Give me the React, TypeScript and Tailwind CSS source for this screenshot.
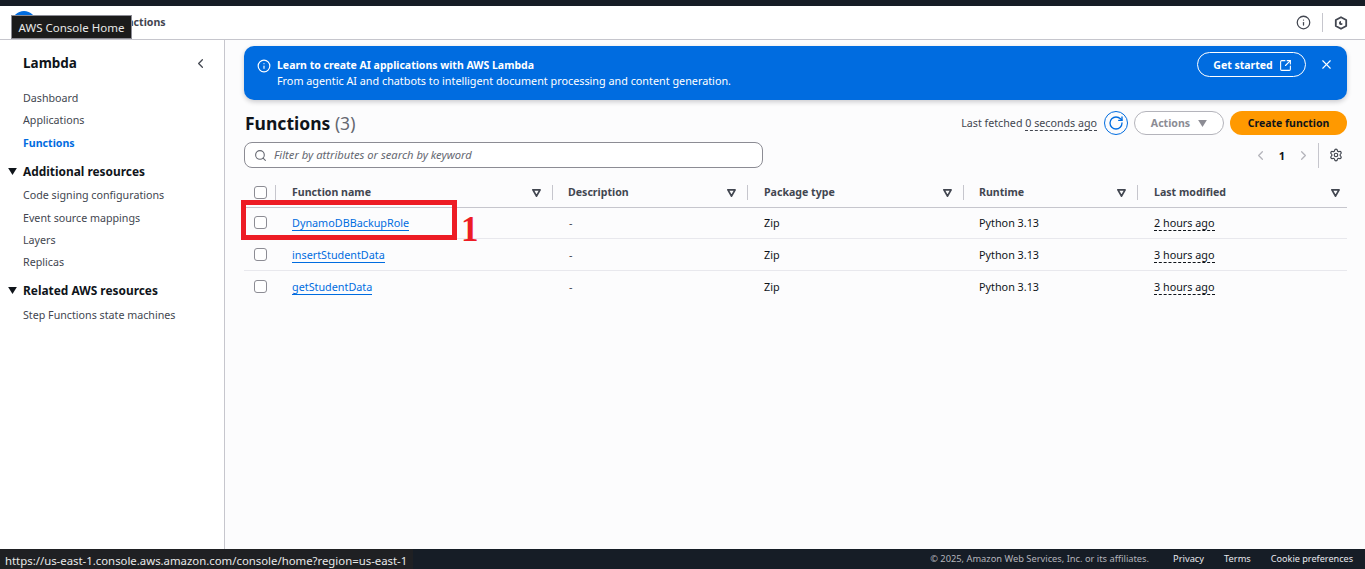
import React from 'react';
import { ChevronLeft, ChevronRight, Info, Search, X, RotateCw, Settings, SquareArrowOutUpRight } from 'lucide-react';

const columns = 'grid grid-cols-[32px_277px_195px_216px_174px_209px]';

const functionRows = [
  { name: 'DynamoDBBackupRole', modified: '2 hours ago', height: 'h-[31px] pb-px' },
  { name: 'insertStudentData', modified: '3 hours ago', height: 'h-[32px]' },
  { name: 'getStudentData', modified: '3 hours ago', height: 'h-[31px] pb-px' },
];

function Caret({ className }: { className: string }) {
  return (
    <svg viewBox="0 0 10 8" className={className}>
      <path d="M0 0h10L5 8z" fill="currentColor" />
    </svg>
  );
}

function FilterCaret() {
  return (
    <svg viewBox="0 0 10 9" className="h-[8px] w-[9px] text-[#424650]">
      <path d="M1 1h8L5 8z" fill="none" stroke="currentColor" strokeWidth="2" strokeLinejoin="round" />
    </svg>
  );
}

function Checkbox() {
  return <span className="block h-[13px] w-[13px] rounded-[3px] border border-[#8c8c94] bg-white" />;
}

function HeaderCell({ label, inset }: { label: string; inset: string }) {
  return (
    <div className={`flex items-center justify-between ${inset}`}>
      <span className="text-[10.6px] font-bold text-[#424650]">{label}</span>
      <span className="flex items-center gap-[11px]">
        <FilterCaret />
        <span className="h-[15px] w-px bg-[#c6c6cd]" />
      </span>
    </div>
  );
}

function SideLink({ label, active, className = '' }: { label: string; active?: boolean; className?: string }) {
  return (
    <div className={`${active ? 'text-[10.6px] font-bold text-[#006ce0]' : 'text-[10.7px] text-[#424650]'} ${className}`}>
      {label}
    </div>
  );
}

function SideSection({ title, listTop, children }: { title: string; listTop: string; children: React.ReactNode }) {
  return (
    <div>
      <div className="flex items-center gap-[6px] pl-[8px] text-[11.9px] font-bold text-[#0f141a]">
        <Caret className="h-[7px] w-[9px] text-[#0f141a]" />
        {title}
      </div>
      <div className={`${listTop} flex flex-col gap-[7px] pl-[23px]`}>{children}</div>
    </div>
  );
}

export default function App() {
  return (
    <div className="relative flex h-[569px] w-[1365px] flex-col overflow-hidden bg-[#fcfcfd] font-['Noto_Sans',sans-serif] leading-[15px]">
      <div className="h-[6px] shrink-0 bg-[#161d26]" />

      <header className="flex h-[34px] shrink-0 items-center justify-between border-b border-[#c6c6cd] bg-white pl-[12px] pr-[17px]">
        <div className="flex items-center">
          <span className="h-[24px] w-[24px] rounded-full bg-[#006ce0]" />
          <span className="ml-[78px] text-[10.6px] font-bold text-[#424650]">Functions</span>
        </div>
        <div className="flex items-center gap-[11px]">
          <Info size={15} strokeWidth={2} className="text-[#424650]" />
          <span className="h-[19px] w-px bg-[#c6c6cd]" />
          <svg viewBox="0 0 14 14" className="h-[14px] w-[14px] text-[#424650]">
            <path d="M7 1.2 12.2 4v6L7 12.8 1.8 10V4z" fill="none" stroke="currentColor" strokeWidth="1.8" strokeLinejoin="round" />
            <path d="M7 5a2 2 0 1 0 1.8 2.8L7 7z" fill="currentColor" />
          </svg>
        </div>
      </header>

      <div className="flex min-h-0 flex-1">
        <aside className="w-[225px] shrink-0 border-r border-[#c6c6cd] bg-white">
          <div className="flex items-center justify-between pl-[23px] pr-[16px] pt-[16px]">
            <span className="text-[13.5px] font-bold text-[#0f141a]">Lambda</span>
            <ChevronLeft size={15} strokeWidth={2} className="text-[#424650]" />
          </div>
          <div className="mt-[20px] flex flex-col gap-[7px] pl-[23px]">
            <SideLink label="Dashboard" />
            <SideLink label="Applications" />
            <SideLink label="Functions" active className="mt-px" />
          </div>
          <div className="mt-[13px] flex flex-col gap-[13px]">
            <SideSection title="Additional resources" listTop="mt-[9px]">
              <SideLink label="Code signing configurations" />
              <SideLink label="Event source mappings" className="mt-px" />
              <SideLink label="Layers" />
              <SideLink label="Replicas" />
            </SideSection>
            <SideSection title="Related AWS resources" listTop="mt-[10px]">
              <SideLink label="Step Functions state machines" />
            </SideSection>
          </div>
        </aside>

        <main className="flex min-w-0 flex-1 flex-col pl-[19px] pr-[18px] pt-[6px]">
          <div className="flex h-[54px] shrink-0 items-start justify-between rounded-[10px] bg-[#006ce0] pl-[13px] pr-[13px] pt-[12px] shadow-[0_2px_5px_rgba(0,7,22,0.2)]">
            <div className="flex gap-[6px] text-[10.8px] text-white">
              <Info size={14} strokeWidth={2} className="mt-[1px]" />
              <div>
                <div className="text-[10.5px] font-bold leading-[15px]">Learn to create AI applications with AWS Lambda</div>
                <div className="leading-[15px]">From agentic AI and chatbots to intelligent document processing and content generation.</div>
              </div>
            </div>
            <div className="-mt-[6px] flex items-center gap-[13px]">
              <div className="flex h-[25px] w-[109px] items-center justify-center gap-[6px] rounded-full border border-white pl-[2px] pt-px text-[10.5px] font-bold text-white">
                Get started
                <SquareArrowOutUpRight size={13} strokeWidth={2} />
              </div>
              <X size={15} strokeWidth={1.8} className="text-white" />
            </div>
          </div>

          <div className="mt-[11px] flex h-[24px] shrink-0 items-center justify-between">
            <h1 className="pl-px text-[17.5px] font-bold leading-[24px] text-[#0f141a]">
              Functions <span className="font-normal text-[#656871]">(3)</span>
            </h1>
            <div className="flex items-center">
              <span className="pb-px text-[10.7px] leading-[14px] text-[#424650]">
                Last fetched{' '}
                <span className="border-b border-dashed border-[#424650]">0 seconds ago</span>
              </span>
              <span className="ml-[7px] flex h-[24px] w-[24px] items-center justify-center rounded-full border border-[#006ce0] text-[#006ce0]">
                <RotateCw size={16} strokeWidth={2} />
              </span>
              <span className="ml-[6px] flex h-[24px] w-[90px] items-center justify-center gap-[8px] rounded-full border border-[#b4b4bb] bg-white text-[10.6px] font-bold text-[#8c8c94]">
                Actions
                <Caret className="h-[7px] w-[9px] text-[#8c8c94]" />
              </span>
              <span className="ml-[6px] flex h-[24px] w-[117px] items-center justify-center rounded-full bg-[#ff9900] text-[10.5px] font-bold text-[#0f141a]">
                Create function
              </span>
            </div>
          </div>

          <div className="mt-[7px] flex h-[26px] shrink-0 items-center justify-between">
            <div className="flex h-[26px] w-[519px] items-center gap-[7px] rounded-[8px] border border-[#8c8c94] bg-white pl-[9px]">
              <Search size={13} strokeWidth={2} className="text-[#656871]" />
              <span className="pb-px text-[11.2px] italic text-[#656871]">Filter by attributes or search by keyword</span>
            </div>
            <div className="flex items-center text-[#b4b4bb]">
              <ChevronLeft size={15} strokeWidth={2} />
              <span className="ml-[8px] w-[12px] text-center text-[11px] font-bold text-[#0f141a]">1</span>
              <ChevronRight size={15} strokeWidth={2} className="ml-[8px]" />
              <span className="ml-[7px] h-[25px] w-px bg-[#c6c6cd]" />
              <Settings size={14} strokeWidth={2} className="ml-[10px] mr-[4px] text-[#424650]" />
            </div>
          </div>

          <div className={`${columns} mt-[13px] h-[27px] shrink-0 items-center border-b border-[#c6c6cd] pb-[3px]`}>
            <div className="flex items-center justify-between pl-[10px]">
              <Checkbox />
              <span className="h-[15px] w-px bg-[#c6c6cd]" />
            </div>
            <HeaderCell label="Function name" inset="pl-[16px]" />
            <HeaderCell label="Description" inset="pl-[15px]" />
            <HeaderCell label="Package type" inset="pl-[16px]" />
            <HeaderCell label="Runtime" inset="pl-[15px]" />
            <div className="flex items-center justify-between pl-[16px] pr-[7px]">
              <span className="text-[10.6px] font-bold text-[#424650]">Last modified</span>
              <FilterCaret />
            </div>
          </div>

          {functionRows.map((row, index) => (
            <div
              key={row.name}
              className={`${columns} ${row.height} shrink-0 items-center text-[10.8px] text-[#0f141a] ${index < 2 ? 'border-b border-[#e8e8ed]' : ''}`}
            >
              <div className="pl-[10px]">
                <Checkbox />
              </div>
              <div className="pl-[16px]">
                <span className="border-b border-[#006ce0] text-[#006ce0]">{row.name}</span>
              </div>
              <div className="pl-[16px] text-[#424650]">-</div>
              <div className="pl-[16px]">Zip</div>
              <div className="pl-[15px]">Python 3.13</div>
              <div className="pl-[16px]">
                <span className="border-b border-dashed border-[#0f141a]">{row.modified}</span>
              </div>
            </div>
          ))}
        </main>
      </div>

      <footer className="flex h-[20px] shrink-0 items-center justify-end gap-[20px] bg-[#161d26] pb-px pr-[12px] text-[9.3px]">
        <span className="mr-[4px] text-[#b4b4bb]">© 2025, Amazon Web Services, Inc. or its affiliates.</span>
        <span className="text-[#e8e8ed]">Privacy</span>
        <span className="text-[#e8e8ed]">Terms</span>
        <span className="text-[9.1px] text-[#e8e8ed]">Cookie preferences</span>
      </footer>

      {/* browser overlays and the screenshot's annotation */}
      <div className="absolute left-[11px] top-[15px] flex h-[24px] w-[121px] items-center justify-center border border-[#8c8c94] bg-[#1b1b1b] text-[11.5px] text-[#e8e8e8]">
        AWS Console Home
      </div>
      <div className="absolute bottom-0 left-0 flex h-[20px] w-[413px] items-center whitespace-nowrap bg-[#1f2023] pl-[5px] pt-[3px] text-[11.37px] text-[#e8e8e8]">
        https://us-east-1.console.aws.amazon.com/console/home?region=us-east-1
      </div>
      <div className="absolute left-[241px] top-[200px] h-[40px] w-[216px] border-[5px] border-[#ed1c24]" />
      <div className="absolute left-[461px] top-[210px] font-['Liberation_Serif',serif] text-[35px] font-bold leading-[40px] text-[#ed1c24]">
        1
      </div>
    </div>
  );
}
